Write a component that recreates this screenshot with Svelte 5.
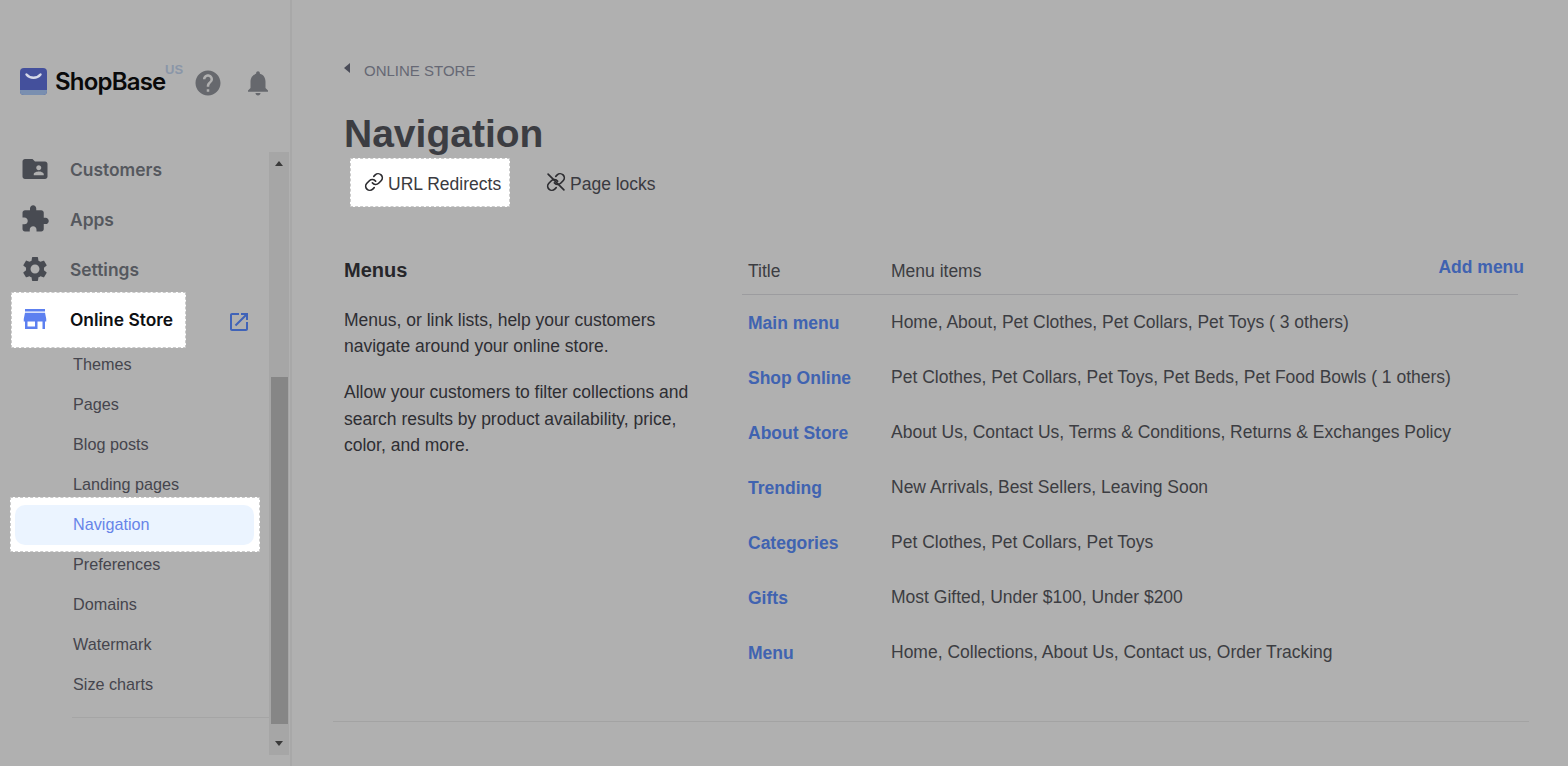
<script>
  const topItems = [
    { label: 'Customers', icon: 'M20 6h-8l-2-2H4c-1.1 0-1.99.9-1.99 2L2 18c0 1.1.9 2 2 2h16c1.1 0 2-.9 2-2V8c0-1.1-.9-2-2-2zm-5 3c1.1 0 2 .9 2 2s-.9 2-2 2-2-.9-2-2 .9-2 2-2zm4 8h-8v-1c0-1.33 2.67-2 4-2s4 .67 4 2v1z' },
    { label: 'Apps', icon: 'M20.5 11H19V7c0-1.1-.9-2-2-2h-4V3.5C13 2.12 11.88 1 10.5 1S8 2.12 8 3.5V5H4c-1.1 0-1.99.9-1.99 2v3.8H3.5c1.49 0 2.7 1.21 2.7 2.7s-1.21 2.7-2.7 2.7H2V20c0 1.1.9 2 2 2h3.8v-1.5c0-1.49 1.21-2.7 2.7-2.7 1.49 0 2.7 1.21 2.7 2.7V22H17c1.1 0 2-.9 2-2v-4h1.5c1.38 0 2.5-1.12 2.5-2.5S21.88 11 20.5 11z' },
    { label: 'Settings', icon: 'M19.14 12.94c.04-.3.06-.61.06-.94 0-.32-.02-.64-.07-.94l2.03-1.58c.18-.14.23-.41.12-.61l-1.92-3.32c-.12-.22-.37-.29-.59-.22l-2.39.96c-.5-.38-1.03-.7-1.62-.94l-.36-2.54c-.04-.24-.24-.41-.48-.41h-3.84c-.24 0-.43.17-.47.41l-.36 2.54c-.59.24-1.13.57-1.62.94l-2.39-.96c-.22-.08-.47 0-.59.22L2.74 8.87c-.12.21-.08.47.12.61l2.03 1.58c-.05.3-.09.63-.09.94s.02.64.07.94l-2.03 1.58c-.18.14-.23.41-.12.61l1.92 3.32c.12.22.37.29.59.22l2.39-.96c.5.38 1.03.7 1.62.94l.36 2.54c.05.24.24.41.48.41h3.84c.24 0 .44-.17.47-.41l.36-2.54c.59-.24 1.13-.56 1.62-.94l2.39.96c.22.08.47 0 .59-.22l1.92-3.32c.12-.22.07-.47-.12-.61l-2.01-1.58zM12 15.6c-1.98 0-3.6-1.62-3.6-3.6s1.62-3.6 3.6-3.6 3.6 1.62 3.6 3.6-1.62 3.6-3.6 3.6z' }
  ];
  const before = ['Themes', 'Pages', 'Blog posts', 'Landing pages'];
  const after = ['Preferences', 'Domains', 'Watermark', 'Size charts'];
  const menus = [
    ['Main menu', 'Home, About, Pet Clothes, Pet Collars, Pet Toys ( 3 others)'],
    ['Shop Online', 'Pet Clothes, Pet Collars, Pet Toys, Pet Beds, Pet Food Bowls ( 1 others)'],
    ['About Store', 'About Us, Contact Us, Terms & Conditions, Returns & Exchanges Policy'],
    ['Trending', 'New Arrivals, Best Sellers, Leaving Soon'],
    ['Categories', 'Pet Clothes, Pet Collars, Pet Toys'],
    ['Gifts', 'Most Gifted, Under $100, Under $200'],
    ['Menu', 'Home, Collections, About Us, Contact us, Order Tracking']
  ];
</script>

<div class="page">
  <aside class="sidebar">
    <div class="brand">
      <svg class="logo" viewBox="0 0 27 27" width="27" height="27">
        <rect width="27" height="27" rx="4" fill="#44509c" />
        <path d="M0 22h27v1a4 4 0 0 1-4 4H4a4 4 0 0 1-4-4z" fill="#7a8fb0" />
        <path d="M6.500 6.500c3.500 4.400 10.500 4.400 14 0" fill="none" stroke="#d5d8e8" stroke-width="2.400" stroke-linecap="round" />
      </svg>
      <span class="wordmark">ShopBase</span>
      <span class="region">US</span>
      <svg class="help" viewBox="0 0 24 24" width="30" height="30"><path d="M12 2C6.480 2 2 6.480 2 12s4.480 10 10 10 10-4.480 10-10S17.520 2 12 2zm1 17h-2v-2h2v2zm2.070-7.750l-.9.920C13.450 12.900 13 13.500 13 15h-2v-.5c0-1.100.45-2.100 1.170-2.830l1.240-1.260c.37-.36.59-.86.59-1.410 0-1.100-.9-2-2-2s-2 .9-2 2H8c0-2.210 1.790-4 4-4s4 1.790 4 4c0 .88-.36 1.680-.93 2.250z" /></svg>
      <svg class="bell" viewBox="0 0 24 24" width="30" height="30"><path d="M12 22c1.100 0 2-.9 2-2h-4c0 1.100.89 2 2 2zm6-6v-5c0-3.070-1.640-5.640-4.500-6.320V4c0-.83-.67-1.500-1.500-1.500s-1.500.67-1.500 1.500v.68C7.630 5.360 6 7.920 6 11v5l-2 2v1h16v-1l-2-2z" /></svg>
    </div>

    <div class="scroll">
      <nav class="nav">
        {#each topItems as item}
          <a class="row" href="#top">
            <svg viewBox="0 0 24 24" width="30" height="30"><path d={item.icon} /></svg>
            <span>{item.label}</span>
          </a>
        {/each}

        <div class="store-row">
          <a class="row current spot" href="#top">
            <svg viewBox="0 0 24 24" width="30" height="30"><path d="M20 4H4v2h16V4zm1 10v-2l-1-5H4l-1 5v2h1v6h10v-6h4v6h2v-6h1zm-9 4H6v-4h6v4z" /></svg>
            <span>Online Store</span>
          </a>
          <svg class="external" viewBox="0 0 24 24" width="24" height="24"><path d="M19 19H5V5h7V3H5c-1.110 0-2 .9-2 2v14c0 1.100.89 2 2 2h14c1.100 0 2-.9 2-2v-7h-2v7zM14 3v2h3.590l-9.830 9.830 1.410 1.410L19 6.410V10h2V3h-7z" /></svg>
        </div>

        {#each before as label}
          <a class="sub" href="#top">{label}</a>
        {/each}
        <div class="spot nav-spot">
          <a class="sub active" href="#top">Navigation</a>
        </div>
        {#each after as label}
          <a class="sub" href="#top">{label}</a>
        {/each}
        <div class="nav-rule"></div>
      </nav>

      <div class="scrollbar">
        <span class="arrow up"></span>
        <div class="track"><div class="thumb"></div></div>
        <span class="arrow down"></span>
      </div>
    </div>
  </aside>

  <main class="main">
    <div class="crumb"><span class="back"></span>ONLINE STORE</div>
    <h1>Navigation</h1>
    <div class="tabs">
      <a class="tab spot" href="#top">
        <svg viewBox="0 0 24 24" width="20" height="20">
          <path d="M10 13a5 5 0 0 0 7.540.54l3-3a5 5 0 0 0-7.070-7.070l-1.720 1.710" />
          <path d="M14 11a5 5 0 0 0-7.540-.54l-3 3a5 5 0 0 0 7.070 7.070l1.710-1.710" />
        </svg>
        URL Redirects
      </a>
      <a class="tab" href="#top">
        <svg viewBox="0 0 24 24" width="20" height="20">
          <path d="M10 13a5 5 0 0 0 7.540.54l3-3a5 5 0 0 0-7.070-7.070l-1.720 1.710" />
          <path d="M14 11a5 5 0 0 0-7.540-.54l-3 3a5 5 0 0 0 7.070 7.070l1.710-1.710" />
          <path d="M2.500 2.500l19 19" />
        </svg>
        Page locks
      </a>
    </div>

    <section class="section">
      <div class="intro">
        <h2>Menus</h2>
        <p>Menus, or link lists, help your customers navigate around your online store.</p>
        <p>Allow your customers to filter collections and search results by product availability, price, color, and more.</p>
      </div>
      <div class="list">
        <div class="list-head">
          <span class="col-title">Title</span>
          <span class="col-items">Menu items</span>
          <a class="add" href="#top">Add menu</a>
        </div>
        {#each menus as menu}
          <div class="menu-row">
            <a class="col-title menu-name" href="#top">{menu[0]}</a>
            <span class="col-items">{menu[1]}</span>
          </div>
        {/each}
      </div>
    </section>
    <div class="end-rule"></div>
  </main>
</div>

<style>
  :global(body) {
    margin: 0;
    background: #b0b0b0;
  }

  a {
    text-decoration: none;
    color: inherit;
  }

  .page {
    display: flex;
    height: 766px;
    overflow: hidden;
    background: #b0b0b0;
    font-family: "Liberation Sans", Arial, sans-serif;
    color: #3c3d42;
  }

  .sidebar {
    width: 290px;
    flex: none;
    border-right: 2px solid #a8a8a8;
  }

  .brand {
    height: 152px;
    box-sizing: border-box;
    padding: 68px 0 0 20px;
    display: flex;
    align-items: flex-start;
  }

  .logo {
    flex: none;
  }

  .wordmark {
    font-family: Inter, sans-serif;
    font-weight: 600;
    font-size: 24px;
    line-height: 28px;
    letter-spacing: -0.8px;
    color: #0a0a0a;
    margin-left: 8px;
    width: 110px;
    white-space: nowrap;
  }

  .region {
    font-family: "Liberation Sans", sans-serif;
    font-weight: 700;
    font-size: 13px;
    line-height: 12px;
    color: #8a96a8;
    margin: -4px 0 0 0;
    width: 26px;
  }

  .help {
    fill: #66686d;
    flex: none;
    margin-left: 2px;
  }

  .bell {
    fill: #66686d;
    flex: none;
    margin-left: 20px;
  }

  .scroll {
    height: 603px;
    display: flex;
    overflow: hidden;
  }

  .nav {
    width: 269px;
    flex: none;
    margin-top: -8px;
  }

  .row {
    display: flex;
    align-items: center;
    height: 50px;
    padding-left: 20px;
    font-family: Inter, sans-serif;
    font-weight: 600;
    font-size: 17.400px;
    color: #55585e;
  }

  .row svg {
    fill: #484b52;
    margin-right: 20px;
    flex: none;
  }

  .store-row {
    display: flex;
    align-items: center;
    height: 51px;
  }

  .current {
    width: 175px;
    height: 56px;
    padding: 0 0 2px 8px;
    margin: 1px 0 0 11px;
    box-sizing: border-box;
    color: #0e0f12;
  }

  .current svg {
    fill: #5d80f0;
  }

  .spot {
    background: #fff;
    border: 1px dashed #cacaca;
  }

  .external {
    fill: #4063b8;
    margin-left: 41px;
    margin-top: 5px;
  }

  .sub {
    display: block;
    height: 40px;
    line-height: 38px;
    padding-left: 73px;
    font-size: 16.200px;
    color: #45454d;
  }

  .nav-spot {
    width: 250px;
    height: 55px;
    margin: -8px 0 -7px 10px;
    box-sizing: border-box;
    padding: 7px 5px 6px 4px;
  }

  .active {
    padding-left: 58px;
    background: #ebf4ff;
    border-radius: 10px;
    color: #6784e8;
  }

  .nav-rule {
    height: 1px;
    margin: 12px 0 0 72px;
    background: #a5a5a5;
  }

  .scrollbar {
    width: 20px;
    display: flex;
    flex-direction: column;
    align-items: center;
    background: #a6a6a6;
  }

  .arrow {
    flex: none;
    width: 0;
    height: 0;
    border-left: 4.500px solid transparent;
    border-right: 4.500px solid transparent;
  }

  .up {
    margin: 9px 0 6px;
    border-bottom: 5px solid #3a3a3a;
  }

  .down {
    margin: 6px 0 9px;
    border-top: 5px solid #3a3a3a;
  }

  .track {
    flex: 1;
    width: 17px;
  }

  .thumb {
    height: 347px;
    margin-top: 205px;
    background: #868686;
  }

  .main {
    flex: 1;
    min-width: 0;
    box-sizing: border-box;
    padding: 0 39px 0 41px;
  }

  .crumb {
    display: flex;
    align-items: center;
    height: 20px;
    margin: 60px 0 0 11px;
    font-size: 15px;
    color: #666874;
  }

  .back {
    width: 0;
    height: 0;
    margin: -4px 14px 0 0;
    border-top: 5.500px solid transparent;
    border-bottom: 5.500px solid transparent;
    border-right: 6px solid #4a4c58;
  }

  h1 {
    margin: 31px 0 0 11px;
    font-size: 39px;
    line-height: 46px;
    font-weight: 700;
    color: #3c3d42;
  }

  .tabs {
    display: flex;
    margin: 1px 0 0 17px;
    height: 49px;
  }

  .tab {
    display: flex;
    align-items: center;
    gap: 4px;
    padding: 4px 0 0 13px;
    width: 160px;
    box-sizing: border-box;
    font-size: 17.500px;
    color: #3a3a40;
    white-space: nowrap;
  }

  .tab + .tab {
    margin-left: 23px;
  }

  .tab svg {
    fill: none;
    stroke: #2c2c30;
    stroke-width: 2;
    stroke-linecap: round;
    flex: none;
    margin-top: -6px;
  }

  .section {
    display: flex;
    margin-top: 37px;
  }

  .intro {
    width: 409px;
    flex: none;
    padding: 13px 0 0 11px;
    box-sizing: border-box;
    font-size: 17.500px;
    line-height: 26.500px;
    color: #2e2e33;
  }

  h2 {
    margin: 0 0 23.600px;
    font-size: 20px;
    line-height: 26px;
    font-weight: 700;
    color: #26262a;
  }

  .intro p {
    width: 350px;
    margin: 0 0 19.500px;
  }

  .list {
    width: 776px;
    flex: none;
    font-size: 17.500px;
  }

  .list-head {
    position: relative;
    display: flex;
    height: 46px;
    padding-top: 4px;
    align-items: center;
    border-bottom: 1px solid #9c9c9f;
  }

  .add {
    position: absolute;
    right: -6px;
    top: 13px;
    font-weight: 700;
    color: #4063b0;
  }

  .menu-row {
    display: flex;
    align-items: center;
    height: 55px;
    color: #3c3d42;
  }

  .col-title {
    width: 149px;
    flex: none;
    padding-left: 6px;
    box-sizing: border-box;
  }

  .menu-name {
    font-weight: 700;
    padding-top: 2px;
    color: #4063b0;
  }

  .end-rule {
    height: 1px;
    margin-top: 41px;
    background: #a3a3a3;
  }
</style>
